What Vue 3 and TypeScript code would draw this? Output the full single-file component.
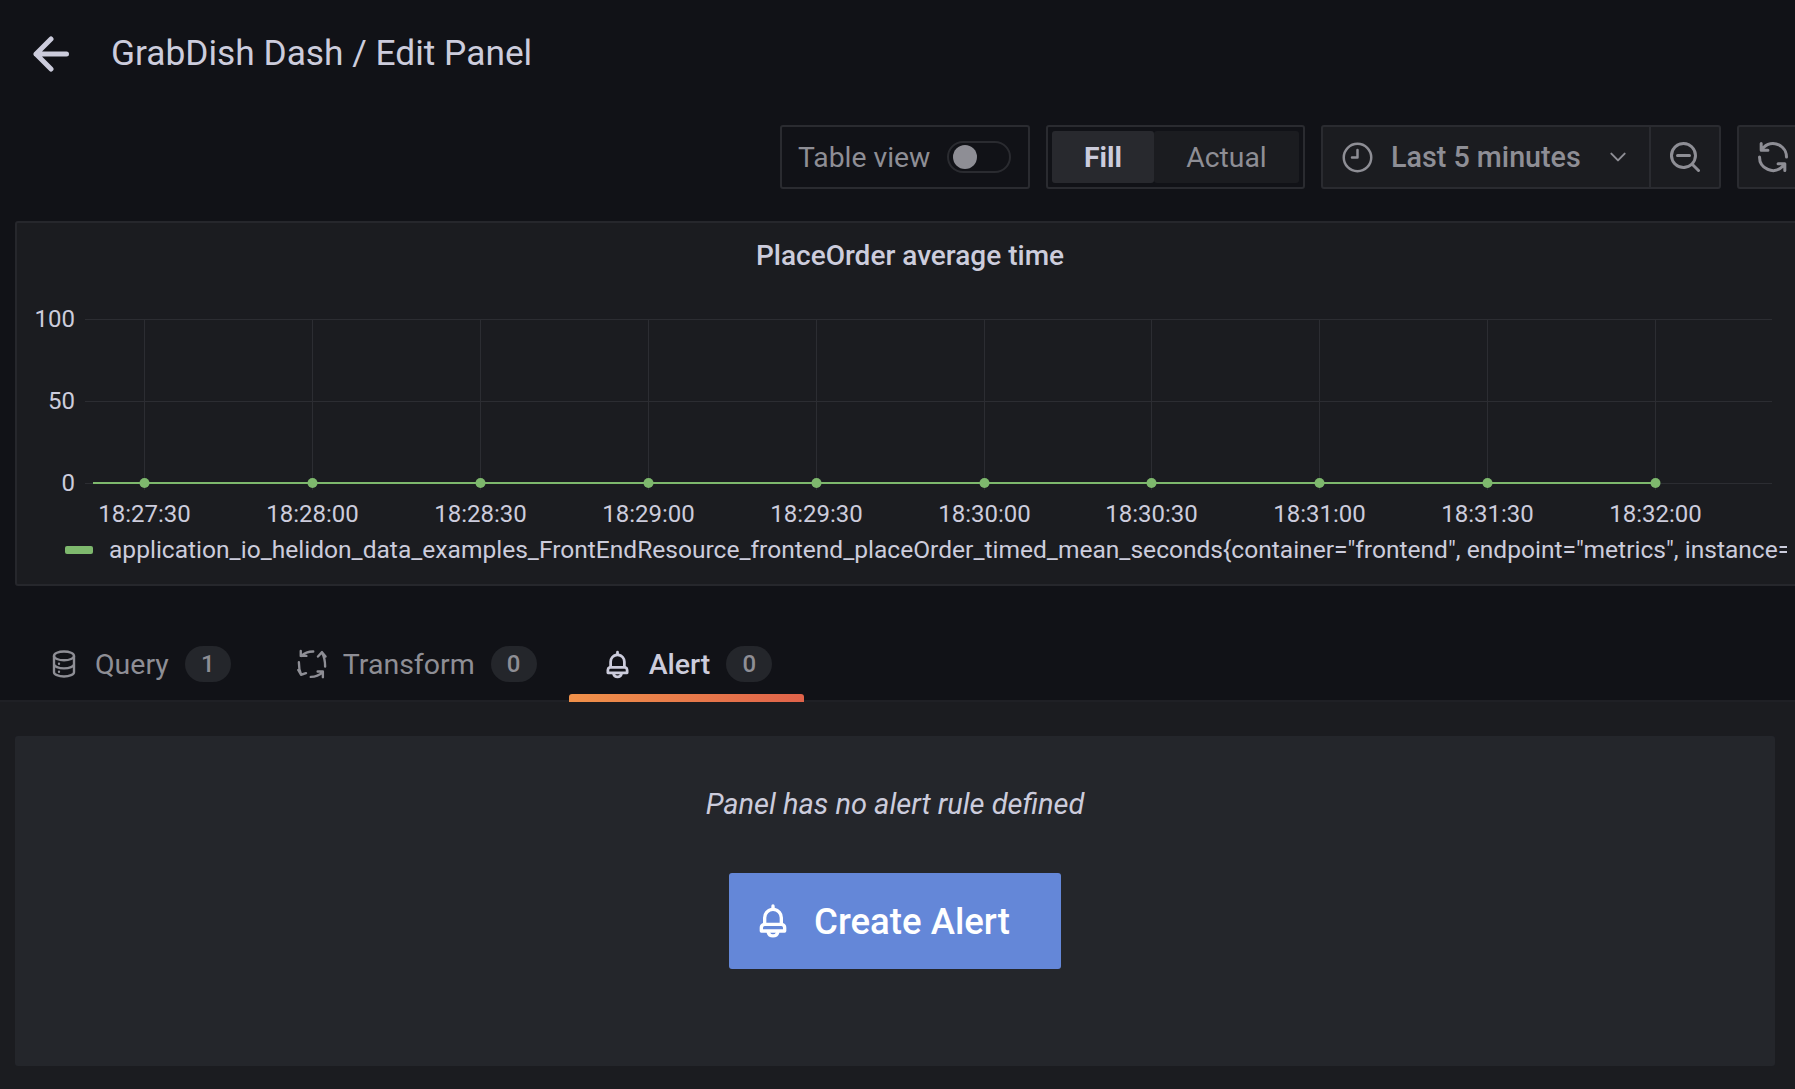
<script setup lang="ts">
const xTimes = ['18:27:30', '18:28:00', '18:28:30', '18:29:00', '18:29:30', '18:30:00', '18:30:30', '18:31:00', '18:31:30', '18:32:00']
const xs = xTimes.map((t, i) => ({ t, x: Math.round(144 + i * 167.9) + 0.5 }))
const yTicks = [
  { label: '100', y: 319 },
  { label: '50', y: 401 },
  { label: '0', y: 483 },
]
const legend = 'application_io_helidon_data_examples_FrontEndResource_frontend_placeOrder_timed_mean_seconds{container="frontend", endpoint="metrics", instance="10.244.0.91:8080", job="frontend"}'
const bell = 'M18,13.18V10a6,6,0,0,0-5-5.91V3a1,1,0,0,0-2,0V4.09A6,6,0,0,0,6,10v3.18A3,3,0,0,0,4,16v2a1,1,0,0,0,1,1H8.14a4,4,0,0,0,7.72,0H19a1,1,0,0,0,1-1V16A3,3,0,0,0,18,13.18ZM8,10a4,4,0,0,1,8,0v3H8Zm4,10a2,2,0,0,1-1.72-1h3.44A2,2,0,0,1,12,20Zm6-3H6V16a1,1,0,0,1,1-1H17a1,1,0,0,1,1,1Z'
</script>

<template>
  <div class="page">
    <header class="title-bar">
      <svg class="back" viewBox="0 0 36 36" fill="none" stroke="currentColor" stroke-width="5" stroke-linecap="round" stroke-linejoin="round">
        <path d="M33.5 18H3M18 3 3 18l15 15" />
      </svg>
      <h1>GrabDish Dash / Edit Panel</h1>
    </header>

    <div class="toolbar">
      <label class="table-view">
        <span>Table view</span>
        <span class="switch"><span class="knob"></span></span>
      </label>
      <div class="radio">
        <span class="opt on">Fill</span>
        <span class="opt">Actual</span>
      </div>
      <div class="picker">
        <div class="range">
          <svg class="clock" viewBox="0 0 24 24" fill="none" stroke="currentColor" stroke-width="1.8" stroke-linecap="round" stroke-linejoin="round">
            <circle cx="12" cy="12" r="10" />
            <path d="M12 6.5V12H8" />
          </svg>
          <span class="range-text">Last 5 minutes</span>
          <svg class="chev" viewBox="0 0 24 24" fill="none" stroke="currentColor" stroke-width="2.4" stroke-linecap="round" stroke-linejoin="round">
            <path d="M4 8l8 8 8-8" />
          </svg>
        </div>
        <div class="zoom-out">
          <svg class="ico" viewBox="0 0 24 24" fill="currentColor">
            <path d="M21.71,20.29,18,16.61A9,9,0,1,0,16.61,18l3.68,3.68a1,1,0,0,0,1.42,0A1,1,0,0,0,21.71,20.29ZM11,18a7,7,0,1,1,7-7A7,7,0,0,1,11,18Zm4-8H7a1,1,0,0,0,0,2h8a1,1,0,0,0,0-2Z" />
          </svg>
        </div>
      </div>
      <div class="refresh">
        <svg class="ico" viewBox="0 0 24 24" fill="currentColor">
          <path d="M19.91,15.51H15.38a1,1,0,0,0,0,2h2.4A8,8,0,0,1,4,12a1,1,0,0,0-2,0,10,10,0,0,0,16.88,7.23V21a1,1,0,0,0,2,0V16.5A1,1,0,0,0,19.91,15.51ZM12,2A10,10,0,0,0,5.12,4.77V3a1,1,0,0,0-2,0V7.5a1,1,0,0,0,1,1h4.5a1,1,0,0,0,0-2H6.22A8,8,0,0,1,20,12a1,1,0,0,0,2,0A10,10,0,0,0,12,2Z" />
        </svg>
      </div>
    </div>

    <section class="panel">
      <div class="panel-title">PlaceOrder average time</div>
      <svg class="chart" width="1790" height="264" viewBox="15 270 1790 264">
        <g class="grid">
          <line v-for="t in yTicks" :key="t.label" x1="85" x2="1772" :y1="t.y + 0.5" :y2="t.y + 0.5" />
          <line v-for="p in xs" :key="p.t" :x1="p.x" :x2="p.x" y1="319" y2="490" />
        </g>
        <text v-for="t in yTicks" :key="'l' + t.label" class="tick" x="75" :y="t.y + 7.5" text-anchor="end">{{ t.label }}</text>
        <text v-for="p in xs" :key="'x' + p.t" class="tick" :x="p.x" y="522" text-anchor="middle">{{ p.t }}</text>
        <line class="series" x1="93" x2="1655" y1="483" y2="483" />
        <circle v-for="p in xs" :key="'d' + p.t" class="dot" :cx="p.x" cy="483" r="5" />
      </svg>
      <div class="legend">
        <span class="swatch"></span>
        <span class="legend-text">{{ legend }}</span>
      </div>
    </section>

    <nav class="tabs">
      <div class="tab">
        <svg class="tab-ico" viewBox="0 0 24 24" fill="none" stroke="currentColor" stroke-width="1.9" stroke-linecap="round">
          <ellipse cx="12" cy="5.5" rx="8" ry="3.5" />
          <path d="M4 5.5v13c0 1.9 3.6 3.5 8 3.5s8-1.6 8-3.5v-13M4 12c0 1.9 3.6 3.5 8 3.5s8-1.6 8-3.5" />
          <path d="M8 11.8v0M8 18.2v0" />
        </svg>
        <span>Query</span>
        <span class="badge">1</span>
      </div>
      <div class="tab">
        <svg class="tab-ico" viewBox="0 0 24 24" fill="none" stroke="currentColor" stroke-width="1.9" stroke-linecap="round" stroke-linejoin="round">
          <path d="M13 2C9 2 6 3 3.5 5.5M3 1.5v4h4.5" />
          <path d="M22.5 14c0-4-.8-8-2.5-11M16.8 6 20 2.5 22.8 6" />
          <path d="M1.5 10.5c0 3.5.3 6.5 1.6 9.5M1 16.8l2.2 3.8 4-1.3" />
          <path d="M11 22.3c4 0 7-1.3 9.5-3.8M20.7 22.5V18h-4.2" />
        </svg>
        <span>Transform</span>
        <span class="badge">0</span>
      </div>
      <div class="tab active">
        <svg class="tab-ico bell" viewBox="0 0 24 24" fill="currentColor"><path :d="bell" /></svg>
        <span>Alert</span>
        <span class="badge">0</span>
      </div>
    </nav>

    <main class="editor">
      <div class="card">
        <p class="empty">Panel has no alert rule defined</p>
        <button class="create">
          <svg class="btn-ico" viewBox="0 0 24 24" fill="currentColor"><path :d="bell" /></svg>
          <span>Create Alert</span>
        </button>
      </div>
    </main>
  </div>
</template>

<style>
html, body {
  margin: 0;
  background: #111217;
}
</style>

<style scoped>
.page {
  width: 1795px;
  height: 1089px;
  overflow: hidden;
  background: #111217;
  color: #ccccdc;
  font-family: Roboto, "Liberation Sans", sans-serif;
  display: flex;
  flex-direction: column;
}
.title-bar {
  height: 108px;
  flex: none;
  box-sizing: border-box;
  display: flex;
  align-items: center;
  gap: 42px;
  padding: 0 0 0 33px;
}
.back {
  width: 36px;
  height: 36px;
}
h1 {
  margin: 0;
  font-size: 35.3px;
  font-weight: 400;
  line-height: 1;
}
.toolbar {
  flex: none;
  height: 64px;
  margin-top: 17px;
  display: flex;
  gap: 16px;
  padding-left: 780px;
  font-size: 28.3px;
  color: #8e8e95;
}
.toolbar > * {
  flex: none;
  box-sizing: border-box;
  height: 64px;
  border: 2px solid #2a2b30;
  border-radius: 3px;
}
.table-view {
  width: 250px;
  display: flex;
  align-items: center;
  padding-left: 16px;
  gap: 17px;
}
.switch {
  box-sizing: border-box;
  width: 64px;
  height: 32px;
  border: 2px solid #2a2b30;
  border-radius: 16px;
  display: flex;
  align-items: center;
  padding-left: 4px;
}
.knob {
  width: 24px;
  height: 24px;
  border-radius: 50%;
  background: #8e8e95;
}
.radio {
  width: 259px;
  display: flex;
  padding: 4px;
}
.opt {
  flex: 1 1 0;
  display: flex;
  align-items: center;
  justify-content: center;
  background: #1b1c20;
  border-radius: 3px;
}
.opt.on {
  flex: 0 0 102px;
  background: #28292e;
  color: #ccccdc;
  font-weight: 700;
}
.picker {
  width: 400px;
  display: flex;
  background: #1b1c20;
}
.range {
  flex: 1;
  display: flex;
  align-items: center;
  padding-left: 18px;
  border-right: 2px solid #2a2b30;
}
.clock {
  width: 33px;
  height: 33px;
  flex: none;
}
.ico {
  width: 36px;
  height: 36px;
  flex: none;
}
.range-text {
  margin-left: 17px;
  font-size: 28.7px;
  font-weight: 500;
}
.chev {
  width: 20px;
  height: 20px;
  margin-left: 27px;
}
.zoom-out {
  width: 68px;
  flex: none;
  display: flex;
  align-items: center;
  justify-content: center;
}
.refresh {
  width: 80px;
  display: flex;
  align-items: center;
  padding-left: 16px;
  background: #1b1c20;
  box-sizing: border-box;
}
.panel {
  flex: none;
  box-sizing: border-box;
  width: 1790px;
  height: 365px;
  margin: 32px 0 0 15px;
  border: 2px solid #26272c;
  border-radius: 3px;
  background: #1b1c20;
  overflow: hidden;
}
.panel-title {
  height: 47px;
  padding-top: 17px;
  box-sizing: border-box;
  text-align: center;
  font-size: 28px;
  font-weight: 500;
  line-height: 32px;
}
.chart {
  display: block;
  margin-left: -2px;
}
.grid line {
  stroke: #2c2d32;
  stroke-width: 1;
}
.tick {
  font-size: 24px;
  fill: #ccccdc;
}
.series {
  stroke: #7eb86d;
  stroke-width: 2;
}
.dot {
  fill: #7eb86d;
}
.legend {
  display: flex;
  align-items: center;
  width: 1770px;
  padding-left: 48px;
  box-sizing: border-box;
}
.swatch {
  flex: none;
  width: 28px;
  height: 8px;
  border-radius: 2px;
  background: #7eb86d;
  margin-right: 16px;
}
.legend-text {
  font-size: 24.55px;
  line-height: 32px;
  white-space: nowrap;
  overflow: hidden;
}
.tabs {
  flex: none;
  height: 116px;
  box-sizing: border-box;
  display: flex;
  align-items: flex-end;
  padding-left: 15px;
  border-bottom: 2px solid #1f2025;
  font-size: 28.5px;
  color: #8e8e95;
}
.tab {
  position: relative;
  display: flex;
  align-items: center;
  height: 72px;
  padding: 0 32px 0 34px;
  box-sizing: border-box;
  gap: 16px;
}
.tab-ico {
  width: 30px;
  height: 30px;
  flex: none;
}
.tab.active {
  color: #ccccdc;
  font-weight: 500;
}
.tab-ico.bell {
  width: 33px;
  height: 33px;
  margin: 0 -1px 0 -2px;
}
.tab.active::after {
  content: "";
  position: absolute;
  left: 0;
  right: 0;
  bottom: -2px;
  height: 8px;
  border-radius: 3px 3px 0 0;
  background: linear-gradient(90deg, #f0914a, #e0634a);
}
.badge {
  width: 46px;
  height: 36px;
  border-radius: 18px;
  background: #24262b;
  color: #8e8e95;
  font-size: 24px;
  font-weight: 500;
  display: flex;
  align-items: center;
  justify-content: center;
}
.editor {
  flex: 1;
  background: #1b1c20;
  padding: 34px 20px 0 15px;
}
.card {
  height: 330px;
  border-radius: 3px;
  background: #24262b;
  display: flex;
  flex-direction: column;
  align-items: center;
  padding-top: 50px;
  box-sizing: border-box;
}
.empty {
  margin: 0;
  font-size: 29px;
  font-style: italic;
  line-height: 36px;
}
.create {
  margin-top: 51px;
  width: 332px;
  height: 96px;
  border: none;
  border-radius: 3px;
  background: #6487d8;
  color: #fff;
  font: 500 36.6px Roboto, "Liberation Sans", sans-serif;
  display: flex;
  align-items: center;
  padding: 0 0 0 24px;
  gap: 21px;
}
.btn-ico {
  width: 40px;
  height: 40px;
  flex: none;
}
</style>
